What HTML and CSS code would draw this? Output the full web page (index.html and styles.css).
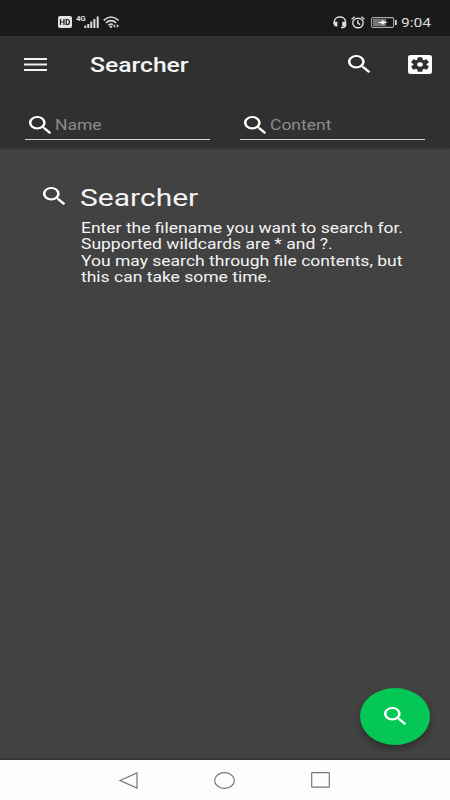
FILE: index.html
```html
<!DOCTYPE html>
<html lang="en">
<head>
<meta charset="utf-8">
<title>Searcher</title>
<link rel="stylesheet" href="styles.css">
</head>
<body>
<svg class="defs" width="0" height="0">
  <symbol id="search" viewBox="3 3 17.49 17.49" preserveAspectRatio="none">
    <path d="M15.5 14h-.79l-.28-.27C15.41 12.59 16 11.11 16 9.5 16 5.91 13.09 3 9.5 3S3 5.91 3 9.5 5.91 16 9.5 16c1.61 0 3.09-.59 4.23-1.57l.27.28v.79l5 4.99L20.49 19l-4.99-5zm-6 0C7.01 14 5 11.99 5 9.5S7.01 5 9.5 5 14 7.01 14 9.5 11.99 14 9.5 14z"/>
  </symbol>
</svg>
<div class="screen">
  <div class="status">
    <svg class="hd" width="14" height="12" viewBox="0 0 14 12"><rect width="14" height="12" rx="2" fill="#e2e2e2"/><path d="M2.5 3v6M6 3v6M2.5 6H6M8.2 3.5v5h1c3 0 3-5 0-5z" fill="none" stroke="#222" stroke-width="1.2"/></svg>
    <span class="net">4G</span>
    <svg class="signal" width="16" height="12" viewBox="0 0 16 12"><path d="M1.3 12V9.5M4.3 12V8M7.3 12V5.5M10.4 12V3M13.7 12V.5" stroke="#ddd" stroke-width="2"/></svg>
    <svg class="wifi" width="17" height="13" viewBox="0 0 17 13"><g fill="none" stroke="#ddd" stroke-width="1.5"><path d="M.7 4.4Q8 -2.3 15.6 4.4M3 6.9Q8 2.4 13.2 6.9M5.4 9.2Q8 7 10 8.6"/></g><path d="M6.2 10.4 8 9.4l1.6 1L8 12.2zM10 10l2.2-1.8v3.6zM16 10l-2.2-1.8v3.6z" fill="#ddd"/></svg>
    <span class="grow"></span>
    <svg class="headset" width="14" height="13" viewBox="0 0 14 13"><path d="M1.2 8V6.2C1.2-.7 12.6-.7 12.6 6.2V9c0 2-1.7 2.6-4.6 2.6" fill="none" stroke="#ddd" stroke-width="1.5"/><path d="M1 5.8h3.4v4.6H2.6Q.6 10 .6 8zM9.2 5.8h3.6v4.6H9.2z" fill="#ddd"/></svg>
    <svg class="alarm" width="14" height="13" viewBox="0 0 14 13"><g fill="none" stroke="#ddd" stroke-width="1.4"><ellipse cx="7" cy="7" rx="5.2" ry="4.8"/><path d="M.6 3.2 3.6.8M13.4 3.2 10.4.8M6.8 4.2v3l2.4 1.5"/></g></svg>
    <svg class="battery" width="26" height="11" viewBox="0 0 26 11"><rect x=".6" y=".6" width="22" height="9.8" rx="1.5" fill="#151515" stroke="#aaa" stroke-width="1.1"/><path d="M2 2h13v7H2z" fill="#777"/><path d="M24 3h1.7v5H24z" fill="#ddd"/><path d="M6.5 5.7 11 4.4V2.8l2 1.6 4 .6-4.5 1.4V8l-2-1.7z" fill="#fff"/></svg>
    <span class="clock wide">9:04</span>
  </div>
  <header class="header">
    <div class="toolbar">
      <svg class="menu" width="23" height="13" viewBox="0 0 23 13"><path d="M0 1h23M0 6.5h23M0 12h23" stroke="#f4f4f4" stroke-width="2.1"/></svg>
      <h1 class="title"><span class="wide">Searcher</span></h1>
      <svg class="icon"><use href="#search"/></svg>
      <svg class="settings" width="24" height="19" viewBox="3 3 18 18" preserveAspectRatio="none"><rect x="3" y="3" width="18" height="18" rx="2" fill="#fff"/><g fill="#303030"><circle cx="12" cy="12" r="4.9"/><path id="tooth" d="M10.3 5.2h3.4l.5 3h-4.4z"/><use href="#tooth" transform="rotate(60 12 12)"/><use href="#tooth" transform="rotate(120 12 12)"/><use href="#tooth" transform="rotate(180 12 12)"/><use href="#tooth" transform="rotate(240 12 12)"/><use href="#tooth" transform="rotate(300 12 12)"/></g><circle cx="12" cy="12" r="2.1" fill="#fff"/></svg>
    </div>
    <div class="fields">
      <div class="field"><svg class="icon"><use href="#search"/></svg><span class="wide">Name</span></div>
      <div class="field"><svg class="icon"><use href="#search"/></svg><span class="wide">Content</span></div>
    </div>
  </header>
  <main class="main">
    <svg class="icon"><use href="#search"/></svg>
    <div class="info">
      <h2 class="heading"><span class="wide">Searcher</span></h2>
      <p class="text wide">Enter the filename you want to search for.<br>Supported wildcards are * and ?.<br>You may search through file contents, but<br>this can take some time.</p>
    </div>
    <div class="fab"><svg class="icon"><use href="#search"/></svg></div>
  </main>
  <nav class="nav">
    <svg width="19" height="17" viewBox="0 0 19 17"><path d="M1 8.5 18 .9v15.2z"/></svg>
    <svg width="21" height="17" viewBox="0 0 21 17"><ellipse cx="10.5" cy="8.5" rx="9.9" ry="7.9"/></svg>
    <svg width="19" height="16" viewBox="0 0 19 16"><rect x=".7" y=".7" width="17.6" height="14.4" rx=".6"/></svg>
  </nav>
</div>
</body>
</html>
```
FILE: styles.css
```css
* { box-sizing: border-box; }
body { margin: 0; font-family: Roboto, sans-serif; color: #f4f4f4; }
h1, h2, p { margin: 0; font-weight: 400; }
svg { display: block; flex: none; }
.defs { position: absolute; }
.screen { width: 450px; height: 800px; display: flex; flex-direction: column; background: #424242; overflow: hidden; }
.icon { width: 22.4px; height: 18px; fill: #fff; }
.wide { display: inline-block; transform: scaleX(1.25); transform-origin: 0 50%; white-space: nowrap; }

.status { height: 36px; flex: none; display: flex; align-items: flex-start; padding: 16px 20px 0 58px; background: #1a1a1a; color: #ddd; }
.net { width: 9px; margin: -1px 0 0 4px; font-size: 8px; line-height: 8px; font-weight: 700; letter-spacing: -.3px; }
.signal { margin-left: -1px; }
.wifi { margin-left: 3px; }
.grow { flex: 1; }
.headset { margin-right: -1px; }
.alarm { margin-left: 5px; }
.battery { margin: 1px 0 0 6px; }
.clock { width: 29px; margin-left: 4px; font-size: 12.5px; line-height: 13px; }

.header { height: 112px; flex: none; background: #303030; box-shadow: 0 1px 2px rgba(0, 0, 0, .25); }
.toolbar { height: 56px; display: flex; align-items: center; padding: 0 18px 0 24px; }
.title { flex: 1; margin: 2px 0 0 43px; font-size: 20px; line-height: 24px; }
.title .wide { font-weight: 500; transform: scaleX(1.235); }
.toolbar .icon { margin-right: 37.2px; }
.fields { display: flex; gap: 30px; padding: 17px 25px 0; }
.field { width: 185px; height: 31px; display: flex; align-items: center; gap: 4.3px; padding: 1px 0 0 3.6px; border-bottom: 1px solid #d8d8d8; color: #8c8c8c; font-size: 14px; }

.main { flex: 1; position: relative; display: flex; align-items: flex-start; padding: 38.5px 0 0 43.3px; border-bottom: 2px solid #363636; }
.info { margin: -3.5px 0 0 14.6px; }
.heading { font-size: 24px; line-height: 30px; }
.text { font-size: 14px; line-height: 16.3px; margin: 7px 0 0 1px; }
.fab { position: absolute; right: 20px; bottom: 13px; width: 70px; height: 57px; display: flex; align-items: center; justify-content: center; padding-bottom: 2px; border-radius: 50%; background: #05c756; box-shadow: 0 4px 7px rgba(0, 0, 0, .3); }

.nav { height: 40px; flex: none; display: flex; align-items: center; justify-content: space-between; padding: 0 120px 0 119px; background: #fdfdfd; }
.nav svg { fill: none; stroke: #777; stroke-width: 1.2; }
```
